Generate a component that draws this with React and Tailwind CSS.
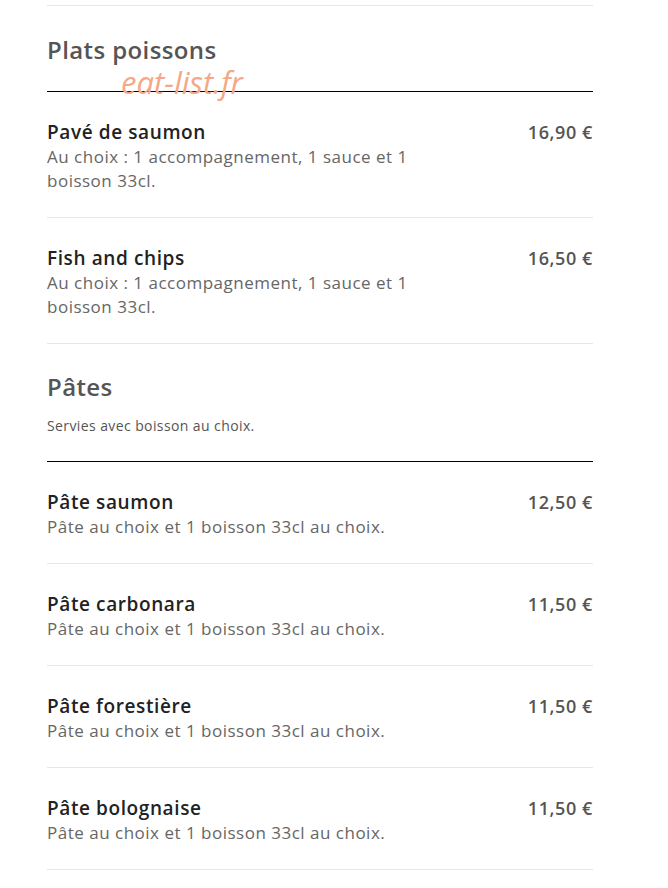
import React from "react";

const sections = [
  {
    title: "Plats poissons",
    items: [
      {
        name: "Pavé de saumon",
        desc: "Au choix : 1 accompagnement, 1 sauce et 1 boisson 33cl.",
        price: "16,90 €",
      },
      {
        name: "Fish and chips",
        desc: "Au choix : 1 accompagnement, 1 sauce et 1 boisson 33cl.",
        price: "16,50 €",
      },
    ],
  },
  {
    title: "Pâtes",
    note: "Servies avec boisson au choix.",
    items: [
      { name: "Pâte saumon", desc: "Pâte au choix et 1 boisson 33cl au choix.", price: "12,50 €" },
      { name: "Pâte carbonara", desc: "Pâte au choix et 1 boisson 33cl au choix.", price: "11,50 €" },
      { name: "Pâte forestière", desc: "Pâte au choix et 1 boisson 33cl au choix.", price: "11,50 €" },
      { name: "Pâte bolognaise", desc: "Pâte au choix et 1 boisson 33cl au choix.", price: "11,50 €" },
    ],
  },
];

const MenuItem = ({ name, desc, price }) => (
  <div className="flex justify-between pt-[27px] pb-[24px] border-b border-[#e6e6e6]">
    <div className="w-3/4">
      <div className="text-[19px] leading-[26px] tracking-[0.6px] font-semibold text-[#222]">{name}</div>
      <div className="text-[17px] leading-[24px] tracking-[0.5px] text-[#666]">{desc}</div>
    </div>
    <div className="text-[18px] leading-[26px] tracking-[0.6px] font-semibold text-[#555]">{price}</div>
  </div>
);

export default function App() {
  return (
    <div
      className="relative bg-white min-h-[888px] pt-[5px]"
      style={{ fontFamily: '"Open Sans", "Liberation Sans", sans-serif' }}
    >
      <div className="ml-[47px] w-[546px] border-t border-[#e6e6e6]">
        {sections.map((s, i) => (
          <div key={s.title}>
            <div className={i === 0 ? "pt-[28px] pb-[25px] border-b border-black" : "pt-[27px] pb-[25px] border-b border-black"}>
              <h2 className="text-[24px] leading-[32px] tracking-[0.4px] font-semibold text-[#555]">{s.title}</h2>
              {s.note && (
                <p className="mt-[13px] text-[14px] leading-[20px] tracking-[0.4px] text-[#555]">{s.note}</p>
              )}
            </div>
            {s.items.map((it) => (
              <MenuItem key={it.name} {...it} />
            ))}
          </div>
        ))}
      </div>
      <div className="absolute left-[121px] top-[62px] text-[31px] leading-[40px] italic text-[#f4a888] pointer-events-none">
        eat-list.fr
      </div>
    </div>
  );
}
